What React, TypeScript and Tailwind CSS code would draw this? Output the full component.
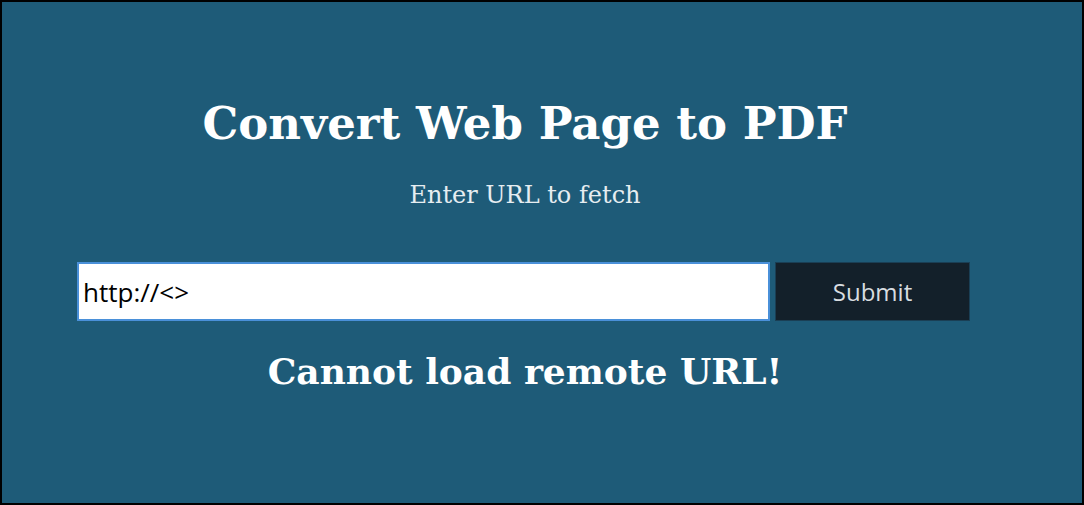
export default function App() {
  return (
    <div className="w-[1084px] h-[505px] border-2 border-black bg-[#1e5b78] box-border overflow-hidden">
      <div className="w-[1046px] flex flex-col items-center font-['DejaVu_Serif',serif]">
        <h1 className="mt-[95px] text-[45px] leading-[54px] font-bold text-white">
          Convert Web Page to PDF
        </h1>
        <p className="mt-[29px] text-[24px] leading-[30px] text-[#e6edf1]">
          Enter URL to fetch
        </p>
        <div className="mt-[52px] self-start ml-[75px] flex gap-[5px] font-['Open_Sans',sans-serif]">
          <input
            defaultValue="http://<>"
            className="w-[693px] h-[59px] bg-white border-2 border-[#4a90d9] px-[4px] text-[26px] text-black outline-none"
          />
          <button className="w-[195px] h-[59px] bg-[#13202a] border border-[#1a3f55] text-[24px] text-[#d8dde0]">
            Submit
          </button>
        </div>
        <h2 className="mt-[26px] text-[36px] leading-[48px] font-bold text-white">
          Cannot load remote URL!
        </h2>
      </div>
    </div>
  );
}
